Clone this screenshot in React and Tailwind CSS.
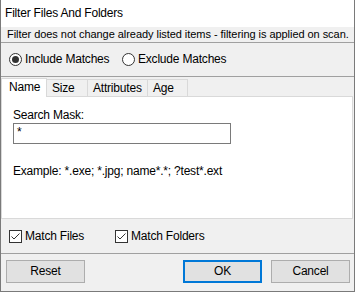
import React, { useState } from "react";

function Radio({ checked, label, onClick, className = "" }) {
  return (
    <label className={`flex items-center gap-[3px] cursor-default ${className}`} onClick={onClick}>
      <span className="w-[13px] h-[13px] rounded-full border border-[#333333] bg-white flex items-center justify-center">
        {checked && <span className="w-[7px] h-[7px] rounded-full bg-[#333333]" />}
      </span>
      <span>{label}</span>
    </label>
  );
}

function Check({ checked, label, onClick, className = "" }) {
  return (
    <label className={`flex items-center gap-[3px] cursor-default ${className}`} onClick={onClick}>
      <span className="w-[13px] h-[13px] border border-[#333333] bg-white flex items-center justify-center">
        {checked && (
          <svg width="11" height="11" viewBox="0 0 11 11">
            <path d="M1.5 5.5 L4 8 L9.5 2.5" fill="none" stroke="#333333" strokeWidth="1" />
          </svg>
        )}
      </span>
      <span>{label}</span>
    </label>
  );
}

export default function App() {
  const [include, setInclude] = useState(true);
  const [files, setFiles] = useState(true);
  const [folders, setFolders] = useState(true);
  const [tab, setTab] = useState("Name");
  const tabs = [
    { name: "Name", w: "w-[46px]" },
    { name: "Size", w: "w-[41px]" },
    { name: "Attributes", w: "w-[60px]" },
    { name: "Age", w: "w-[40px]" },
  ];

  return (
    <div className="w-[355px] h-[292px] bg-[#f0f0f0] border-l border-r border-b border-[#7a7a7a] flex flex-col text-[12px] tracking-[-0.2px] text-black font-['Liberation_Sans',Arial,sans-serif] leading-[15px] overflow-hidden">
      <div className="h-[27px] bg-white flex items-center pl-[4px]">Filter Files And Folders</div>
      <div className="h-[16px] flex items-center pl-[6px] border-b border-[#a0a0a0] whitespace-nowrap text-[11px] tracking-[-0.05px]">
        Filter does not change already listed items - filtering is applied on scan.
      </div>
      <div className="h-[34px] flex items-center pl-[8px] border-b border-[#a0a0a0]">
        <Radio className="w-[113px]" checked={include} label="Include Matches" onClick={() => setInclude(true)} />
        <Radio checked={!include} label="Exclude Matches" onClick={() => setInclude(false)} />
      </div>
      <div className="h-[19px] flex items-end pt-[1px]">
        {tabs.map((t, i) =>
          t.name === tab ? (
            <div
              key={t.name}
              onClick={() => setTab(t.name)}
              className={`${t.w} h-[19px] relative z-10 -mb-px bg-white border-t border-l border-r border-[#d9d9d9] pl-[7px] pt-[1px]`}
            >
              {t.name}
            </div>
          ) : (
            <div
              key={t.name}
              onClick={() => setTab(t.name)}
              className={`${t.w} h-[17px] border-t border-r border-[#d9d9d9] pl-[5px] pt-[1px] ${i === 0 ? "border-l" : ""}`}
            >
              {t.name}
            </div>
          )
        )}
      </div>
      <div className="h-[123px] bg-white border border-[#d9d9d9] mr-[1px] pl-[11px] pt-[11px] flex flex-col">
        <div>Search Mask:</div>
        <div className="w-[218px] h-[21px] border border-[#7a7a7a] bg-white pl-[3px] pt-[1px]">*</div>
        <div className="mt-[20px]">Example: *.exe; *.jpg; name*.*; ?test*.ext</div>
      </div>
      <div className="h-[35px] flex items-center pl-[8px] border-b border-[#a0a0a0]">
        <Check className="w-[106px]" checked={files} label="Match Files" onClick={() => setFiles(!files)} />
        <Check checked={folders} label="Match Folders" onClick={() => setFolders(!folders)} />
      </div>
      <div className="flex-1 flex items-start pt-[6px] pl-[5px] pr-[4px]">
        <button className="w-[79px] h-[23px] bg-[#e1e1e1] border border-[#adadad]">Reset</button>
        <div className="flex-1" />
        <button className="w-[79px] h-[23px] bg-[#e1e1e1] border-2 border-[#0078d7]">OK</button>
        <button className="w-[79px] h-[23px] bg-[#e1e1e1] border border-[#adadad] ml-[9px]">Cancel</button>
      </div>
    </div>
  );
}
